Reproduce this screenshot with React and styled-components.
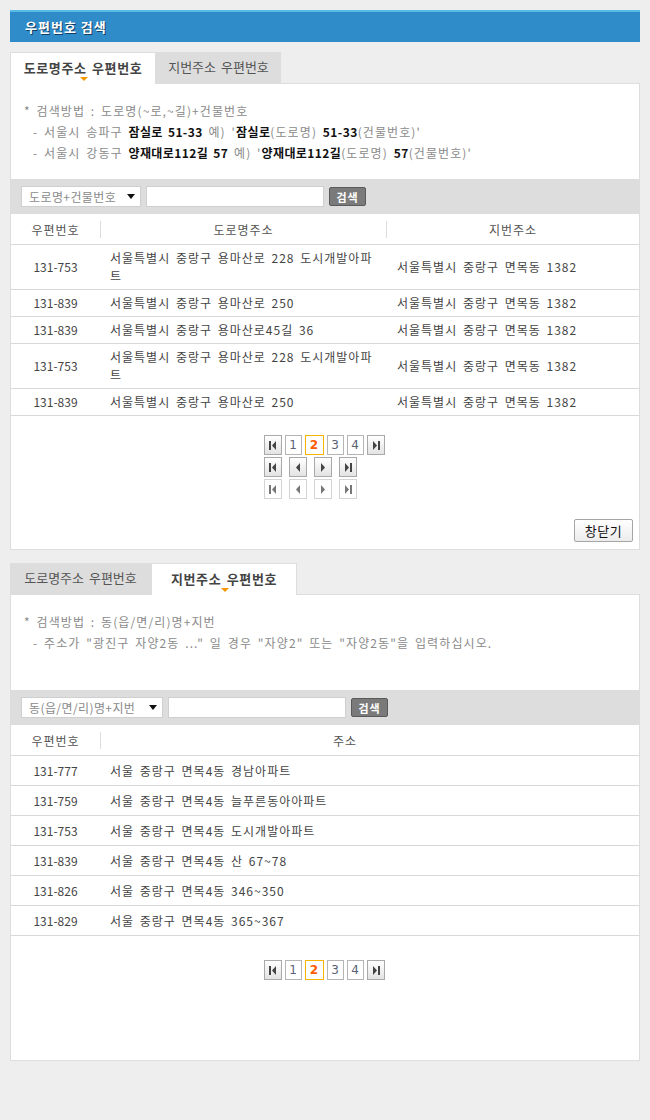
import styled, { createGlobalStyle } from 'styled-components';

const GlobalStyle = createGlobalStyle`
  html, body {
    margin: 0;
    padding: 0;
    background: #eeeeee;
    font-family: "Noto Sans CJK KR", "DejaVu Sans", sans-serif;
  }
`;

const roadRows = [
  { zip: '131-753', road: '서울특별시 중랑구 용마산로 228 도시개발아파트', jibun: '서울특별시 중랑구 면목동 1382' },
  { zip: '131-839', road: '서울특별시 중랑구 용마산로 250', jibun: '서울특별시 중랑구 면목동 1382' },
  { zip: '131-839', road: '서울특별시 중랑구 용마산로45길 36', jibun: '서울특별시 중랑구 면목동 1382' },
  { zip: '131-753', road: '서울특별시 중랑구 용마산로 228 도시개발아파트', jibun: '서울특별시 중랑구 면목동 1382' },
  { zip: '131-839', road: '서울특별시 중랑구 용마산로 250', jibun: '서울특별시 중랑구 면목동 1382' },
];

const jibunRows = [
  { zip: '131-777', addr: '서울 중랑구 면목4동 경남아파트' },
  { zip: '131-759', addr: '서울 중랑구 면목4동 늘푸른동아아파트' },
  { zip: '131-753', addr: '서울 중랑구 면목4동 도시개발아파트' },
  { zip: '131-839', addr: '서울 중랑구 면목4동 산 67~78' },
  { zip: '131-826', addr: '서울 중랑구 면목4동 346~350' },
  { zip: '131-829', addr: '서울 중랑구 면목4동 365~367' },
];

const Arrow = ({ dir, bar }) => (
  <svg width="8" height="9" viewBox="0 0 8 9">
    {dir === 'left' ? (
      <>
        {bar && <rect x="0" y="0" width="2" height="9" fill="currentColor" />}
        <path d={bar ? 'M7 0 L7 9 L3 4.5 Z' : 'M6 0 L6 9 L2 4.5 Z'} fill="currentColor" />
      </>
    ) : (
      <>
        <path d={bar ? 'M1 0 L1 9 L5 4.5 Z' : 'M2 0 L2 9 L6 4.5 Z'} fill="currentColor" />
        {bar && <rect x="6" y="0" width="2" height="9" fill="currentColor" />}
      </>
    )}
  </svg>
);

const Pager = ({ numbers }) => (
  <PagerRow $gap={3}>
    <PageBtn>
      <Arrow dir="left" bar />
    </PageBtn>
    {numbers.map((n) => (
      <PageNum key={n} $current={n === 2}>
        {n}
      </PageNum>
    ))}
    <PageBtn>
      <Arrow dir="right" bar />
    </PageBtn>
  </PagerRow>
);

const ArrowPager = ({ disabled }) => (
  <PagerRow $gap={7}>
    <PageBtn $disabled={disabled}>
      <Arrow dir="left" bar />
    </PageBtn>
    <PageBtn $disabled={disabled}>
      <Arrow dir="left" />
    </PageBtn>
    <PageBtn $disabled={disabled}>
      <Arrow dir="right" />
    </PageBtn>
    <PageBtn $disabled={disabled}>
      <Arrow dir="right" bar />
    </PageBtn>
  </PagerRow>
);

const SearchBar = ({ option, selectWidth }) => (
  <SSearch>
    <SSelect $w={selectWidth}>
      <span>{option}</span>
      <i />
    </SSelect>
    <SInput />
    <SSearchBtn>검색</SSearchBtn>
  </SSearch>
);

const App = () => {
  return (
    <>
      <GlobalStyle />
      <SWrapper>
        <STitle>우편번호 검색</STitle>

        <SSection>
          <STabs>
            <STab $active $w={146}>도로명주소 우편번호</STab>
            <STab $w={125}>지번주소 우편번호</STab>
          </STabs>
          <SPanel>
            <SInfo>
              <p>* 검색방법 : 도로명(~로,~길)+건물번호</p>
              <p className="sub">
                - 서울시 송파구 <b>잠실로 51-33</b> 예) '<b>잠실로</b>(도로명) <b>51-33</b>(건물번호)'
              </p>
              <p className="sub">
                - 서울시 강동구 <b>양재대로112길 57</b> 예) '<b>양재대로112길</b>(도로명) <b>57</b>(건물번호)'
              </p>
            </SInfo>
            <SearchBar option="도로명+건물번호" selectWidth={120} />
            <STable>
              <colgroup>
                <col style={{ width: 89 }} />
                <col style={{ width: 286 }} />
                <col />
              </colgroup>
              <thead>
                <tr>
                  <th><span>우편번호</span></th>
                  <th className="sep"><span>도로명주소</span></th>
                  <th className="sep"><span>지번주소</span></th>
                </tr>
              </thead>
              <tbody>
                {roadRows.map((r, i) => (
                  <tr key={i}>
                    <td className="zip">{r.zip}</td>
                    <td>{r.road}</td>
                    <td>{r.jibun}</td>
                  </tr>
                ))}
              </tbody>
            </STable>
            <SPaging>
              <Pager numbers={[1, 2, 3, 4]} />
              <ArrowPager />
              <ArrowPager disabled />
            </SPaging>
            <SFooter>
              <SCloseBtn>창닫기</SCloseBtn>
            </SFooter>
          </SPanel>
        </SSection>

        <SSection $top={13}>
          <STabs>
            <STab $w={141}>도로명주소 우편번호</STab>
            <STab $active $w={146}>지번주소 우편번호</STab>
          </STabs>
          <SPanel $pb={80}>
            <SInfo>
              <p>* 검색방법 : 동(읍/면/리)명+지번</p>
              <p className="sub">- 주소가 "광진구 자양2동 ..." 일 경우 "자양2" 또는 "자양2동"을 입력하십시오.</p>
            </SInfo>
            <SearchBar option="동(읍/면/리)명+지번" selectWidth={142} />
            <STable $single>
              <colgroup>
                <col style={{ width: 89 }} />
                <col />
              </colgroup>
              <thead>
                <tr>
                  <th><span>우편번호</span></th>
                  <th className="sep wide"><span>주소</span></th>
                </tr>
              </thead>
              <tbody>
                {jibunRows.map((r, i) => (
                  <tr key={i}>
                    <td className="zip">{r.zip}</td>
                    <td>{r.addr}</td>
                  </tr>
                ))}
              </tbody>
            </STable>
            <SPaging $top={24}>
              <Pager numbers={[1, 2, 3, 4]} />
            </SPaging>
          </SPanel>
        </SSection>
      </SWrapper>
    </>
  );
};

const SWrapper = styled.div`
  padding: 10px 10px 40px 10px;
  width: 630px;
`;

const STitle = styled.div`
  height: 30px;
  border-top: 2px solid #55bde6;
  background: #2f8cc8;
  color: #fff;
  font-size: 13px;
  font-weight: bold;
  letter-spacing: 1px;
  line-height: 30px;
  padding-left: 15px;
  text-shadow: 1px 1px 0 #123e66;
`;

const SSection = styled.div`
  margin-top: ${(p) => p.$top || 10}px;
`;

const STabs = styled.div`
  display: flex;
  height: 32px;
  position: relative;
  z-index: 1;
`;

const STab = styled.div`
  position: relative;
  box-sizing: border-box;
  width: ${(p) => p.$w}px;
  height: ${(p) => (p.$active ? 32 : 31)}px;
  display: flex;
  align-items: center;
  justify-content: center;
  font-size: 13px;
  letter-spacing: ${(p) => (p.$active ? 0.6 : 0)}px;
  word-spacing: 2px;
  color: ${(p) => (p.$active ? '#444' : '#555')};
  font-weight: ${(p) => (p.$active ? 'bold' : 'normal')};
  background: ${(p) => (p.$active ? '#fff' : '#dddddd')};
  border: ${(p) => (p.$active ? '1px solid #dddddd' : 'none')};
  border-bottom: none;
  padding-bottom: 2px;
  &::after {
    content: '';
    display: ${(p) => (p.$active ? 'block' : 'none')};
    position: absolute;
    left: 50%;
    bottom: 3px;
    margin-left: -3px;
    border-left: 4px solid transparent;
    border-right: 4px solid transparent;
    border-top: 4px solid #f39800;
  }
`;

const SPanel = styled.div`
  margin-top: -1px;
  background: #fff;
  border: 1px solid #dddddd;
  padding-bottom: ${(p) => p.$pb || 0}px;
`;

const SInfo = styled.div`
  box-sizing: border-box;
  height: 95px;
  padding: 16px 0 0 13px;
  font-size: 12px;
  letter-spacing: 1.1px;
  word-spacing: 2px;
  color: #8a8a8a;
  p {
    margin: 0;
    line-height: 21px;
  }
  .sub {
    padding-left: 9px;
  }
  b {
    color: #111;
    letter-spacing: 0.4px;
  }
`;

const SSearch = styled.div`
  height: 35px;
  background: #dddddd;
  display: flex;
  align-items: center;
  padding-left: 10px;
`;

const SSelect = styled.div`
  box-sizing: border-box;
  width: ${(p) => p.$w}px;
  height: 21px;
  background: #fff;
  border: 1px solid #cfcfcf;
  display: flex;
  align-items: center;
  justify-content: space-between;
  padding: 0 5px 0 7px;
  font-size: 12px;
  letter-spacing: 0.4px;
  color: #8a8a8a;
  i {
    border-left: 4px solid transparent;
    border-right: 4px solid transparent;
    border-top: 5px solid #111;
  }
`;

const SInput = styled.div`
  box-sizing: border-box;
  width: 178px;
  height: 21px;
  margin-left: 5px;
  background: #fff;
  border: 1px solid #cfcfcf;
`;

const SSearchBtn = styled.div`
  box-sizing: border-box;
  width: 37px;
  height: 19px;
  margin-left: 5px;
  background: #7a7a7a;
  border: 1px solid #5a5a5a;
  border-radius: 2px;
  color: #fff;
  font-size: 11px;
  font-weight: bold;
  letter-spacing: 1px;
  display: flex;
  align-items: center;
  justify-content: center;
`;

const STable = styled.table`
  width: 100%;
  border-collapse: collapse;
  table-layout: fixed;
  font-size: 12px;
  letter-spacing: 1px;
  word-spacing: 2px;
  th {
    height: 30px;
    padding: 0;
    font-weight: normal;
    color: #555;
    text-align: center;
    border-bottom: 1px solid #d8d8d8;
  }
  th.sep span {
    display: block;
    border-left: 1px solid #dddddd;
    line-height: 17px;
  }
  th.wide span {
    padding-right: 50px;
  }
  td {
    padding: ${(p) => (p.$single ? '6px' : '4px')} 10px;
    height: ${(p) => (p.$single ? 17 : 18)}px;
    line-height: ${(p) => (p.$single ? 17 : 18)}px;
    color: #444;
    border-bottom: 1px solid #d8d8d8;
    vertical-align: middle;
  }
  td.zip {
    text-align: center;
    padding: 0;
    letter-spacing: 0;
  }
  td:nth-child(3) {
    padding-left: 11px;
  }
`;

const SPaging = styled.div`
  display: flex;
  flex-direction: column;
  align-items: center;
  gap: 2px;
  padding-top: ${(p) => p.$top || 19}px;
  padding-left: 1px;
`;

const PagerRow = styled.div`
  display: flex;
  gap: ${(p) => p.$gap}px;
  width: 124px;
`;

const PageBtn = styled.div`
  box-sizing: border-box;
  width: 18px;
  height: 20px;
  display: flex;
  align-items: center;
  justify-content: center;
  border: 1px solid ${(p) => (p.$disabled ? '#d4d4d4' : '#a9a9a9')};
  background: ${(p) => (p.$disabled ? '#fff' : 'linear-gradient(#ffffff, #e3e3e3)')};
  color: ${(p) => (p.$disabled ? '#777' : '#444')};
`;

const PageNum = styled.div`
  box-sizing: border-box;
  width: ${(p) => (p.$current ? 19 : 17)}px;
  height: 20px;
  display: flex;
  align-items: center;
  justify-content: center;
  border: 1px solid ${(p) => (p.$current ? '#f7b500' : '#b5b5b5')};
  background: #fff;
  font-family: "DejaVu Sans", sans-serif;
  font-size: 12px;
  font-weight: ${(p) => (p.$current ? 'bold' : 'normal')};
  color: ${(p) => (p.$current ? '#ff5a00' : '#5a6075')};
`;

const SFooter = styled.div`
  display: flex;
  justify-content: flex-end;
  padding: 20px 6px 7px 0;
`;

const SCloseBtn = styled.div`
  box-sizing: border-box;
  width: 59px;
  height: 23px;
  display: flex;
  align-items: center;
  justify-content: center;
  border: 1px solid #a5a5a5;
  border-radius: 2px;
  background: linear-gradient(#ffffff, #ececec);
  font-size: 13px;
  letter-spacing: 0.5px;
  color: #111;
`;

export default App;
